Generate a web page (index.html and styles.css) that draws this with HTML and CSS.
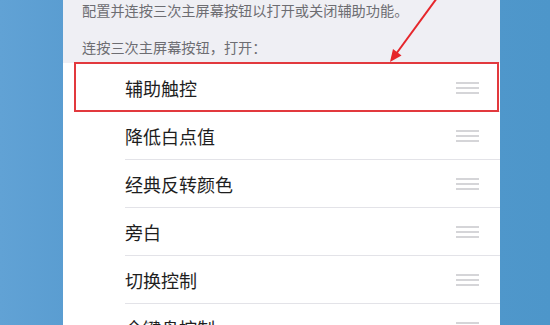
FILE: index.html
```html
<!DOCTYPE html>
<html lang="zh-CN">
<head>
<meta charset="utf-8">
<link rel="stylesheet" href="styles.css">
</head>
<body>
<div class="screen">
  <div class="panel">
    <div class="header">
      <p class="note first">配置并连按三次主屏幕按钮以打开或关闭辅助功能。</p>
      <p class="note second">连按三次主屏幕按钮，打开：</p>
    </div>
    <ul class="list">
      <li class="row"><div class="row-inner"><span class="label">辅助触控</span><svg class="grip" viewBox="0 0 23 12" width="23" height="12"><path d="M0 1H23M0 6H23M0 11H23"/></svg></div></li>
      <li class="row"><div class="row-inner"><span class="label">降低白点值</span><svg class="grip" viewBox="0 0 23 12" width="23" height="12"><path d="M0 1H23M0 6H23M0 11H23"/></svg></div></li>
      <li class="row"><div class="row-inner"><span class="label">经典反转颜色</span><svg class="grip" viewBox="0 0 23 12" width="23" height="12"><path d="M0 1H23M0 6H23M0 11H23"/></svg></div></li>
      <li class="row"><div class="row-inner"><span class="label">旁白</span><svg class="grip" viewBox="0 0 23 12" width="23" height="12"><path d="M0 1H23M0 6H23M0 11H23"/></svg></div></li>
      <li class="row"><div class="row-inner"><span class="label">切换控制</span><svg class="grip" viewBox="0 0 23 12" width="23" height="12"><path d="M0 1H23M0 6H23M0 11H23"/></svg></div></li>
      <li class="row"><div class="row-inner"><span class="label">全键盘控制</span><svg class="grip" viewBox="0 0 23 12" width="23" height="12"><path d="M0 1H23M0 6H23M0 11H23"/></svg></div></li>
    </ul>
  </div>
  <div class="highlight"></div>
  <svg class="arrow" viewBox="0 0 550 325" width="550" height="325">
    <line x1="437" y1="-2" x2="396" y2="54"/>
    <polygon points="390,62 401.5,55.5 393,49"/>
  </svg>
</div>
</body>
</html>
```

FILE: styles.css
```css
html, body {
  margin: 0;
  padding: 0;
}
body {
  width: 550px;
  height: 325px;
  overflow: hidden;
  font-family: "Noto Sans CJK SC", "Noto Sans", sans-serif;
}
.screen {
  position: relative;
  width: 550px;
  height: 325px;
  overflow: hidden;
  background: linear-gradient(90deg, #61a2d5 0%, #5a9dd1 12%, #4f97cb 90%, #4d96ca 100%);
}
.panel {
  margin-left: 63px;
  width: 437px;
  height: 325px;
  background: #ffffff;
}
.header {
  background: #efeff4;
  height: 63px;
  padding-left: 19px;
  box-sizing: border-box;
}
.note {
  margin: 0;
  font-size: 14.2px;
  line-height: 20px;
  color: #6d6d72;
  white-space: nowrap;
}
.note.first {
  padding-top: 0;
}
.note.second {
  margin-top: 17px;
}
.list {
  list-style: none;
  margin: 0;
  padding: 0;
  background: #fff;
}
.row {
  padding-left: 62px;
  height: 48px;
}
.row:first-child {
  padding-top: 1px;
}
.row-inner {
  height: 48px;
  box-sizing: border-box;
  border-bottom: 1px solid #e3e3e8;
  display: flex;
  align-items: center;
  justify-content: space-between;
  padding-right: 21px;
}
.label {
  font-size: 18px;
  color: #1e1e1e;
  line-height: 24px;
}
.grip {
  display: block;
}
.grip path {
  stroke: #c8c8cc;
  stroke-width: 1.6;
  fill: none;
}
.highlight {
  position: absolute;
  left: 74px;
  top: 62px;
  width: 425px;
  height: 50px;
  box-sizing: border-box;
  border: 2px solid #e2393e;
}
.arrow {
  position: absolute;
  left: 0;
  top: 0;
}
.arrow line {
  stroke: #e6262b;
  stroke-width: 2;
}
.arrow polygon {
  fill: #e6262b;
}
```
